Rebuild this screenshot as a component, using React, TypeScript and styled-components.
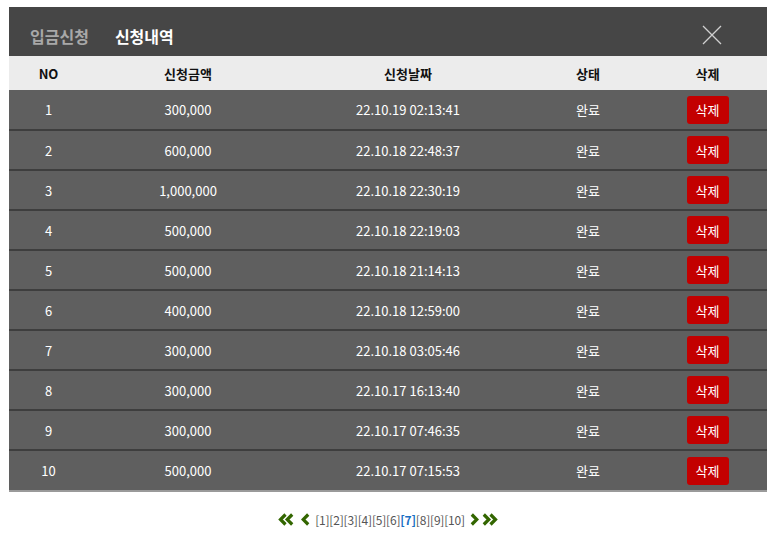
import { styled, createGlobalStyle } from "styled-components";

interface Deposit {
    no: number;
    amount: string;
    date: string;
    status: string;
}

const history: Deposit[] = [
    { no: 1, amount: "300,000", date: "22.10.19 02:13:41", status: "완료" },
    { no: 2, amount: "600,000", date: "22.10.18 22:48:37", status: "완료" },
    { no: 3, amount: "1,000,000", date: "22.10.18 22:30:19", status: "완료" },
    { no: 4, amount: "500,000", date: "22.10.18 22:19:03", status: "완료" },
    { no: 5, amount: "500,000", date: "22.10.18 21:14:13", status: "완료" },
    { no: 6, amount: "400,000", date: "22.10.18 12:59:00", status: "완료" },
    { no: 7, amount: "300,000", date: "22.10.18 03:05:46", status: "완료" },
    { no: 8, amount: "300,000", date: "22.10.17 16:13:40", status: "완료" },
    { no: 9, amount: "300,000", date: "22.10.17 07:46:35", status: "완료" },
    { no: 10, amount: "500,000", date: "22.10.17 07:15:53", status: "완료" },
];

const pages = [1, 2, 3, 4, 5, 6, 7, 8, 9, 10];
const currentPage = 7;

const Chevron = ({ dir, double }: { dir: "left" | "right"; double?: boolean }) => {
    const w = double ? 16 : 9;
    const flip = dir === "left" ? `translate(${w} 0) scale(-1 1)` : undefined;
    return (
        <svg width={w} height="13" viewBox={`0 0 ${w} 13`}>
            <g transform={flip} fill="none" stroke="#336600" strokeWidth="3.2" strokeLinejoin="miter">
                <polyline points="1.8,1.5 6.8,6.5 1.8,11.5" />
                {double && <polyline points="8.5,1.5 13.5,6.5 8.5,11.5" />}
            </g>
        </svg>
    );
};

const App = () => {
    return (
        <>
            <GlobalStyle />
            <Page>
                <Panel>
                    <TopBar>
                        <Tabs>
                            <Tab>입금신청</Tab>
                            <Tab $active>신청내역</Tab>
                        </Tabs>
                        <CloseButton aria-label="close">
                            <svg width="20" height="20" viewBox="0 0 20 20">
                                <path d="M1 1 L19 19 M19 1 L1 19" stroke="#d0d0d0" strokeWidth="1.3" />
                            </svg>
                        </CloseButton>
                    </TopBar>
                    <Table>
                        <colgroup>
                            <col style={{ width: 79 }} />
                            <col style={{ width: 200 }} />
                            <col style={{ width: 240 }} />
                            <col style={{ width: 120 }} />
                            <col style={{ width: 119 }} />
                        </colgroup>
                        <thead>
                            <tr>
                                <Th>NO</Th>
                                <Th>신청금액</Th>
                                <Th>신청날짜</Th>
                                <Th>상태</Th>
                                <Th>삭제</Th>
                            </tr>
                        </thead>
                        <tbody>
                            {history.map((row) => (
                                <Row key={row.no}>
                                    <Td>{row.no}</Td>
                                    <Td>{row.amount}</Td>
                                    <Td>{row.date}</Td>
                                    <Td>{row.status}</Td>
                                    <Td>
                                        <DeleteButton>삭제</DeleteButton>
                                    </Td>
                                </Row>
                            ))}
                        </tbody>
                    </Table>
                </Panel>
                <Pager>
                    <PagerArrow $gap={7}><Chevron dir="left" double /></PagerArrow>
                    <PagerArrow $gap={5}><Chevron dir="left" /></PagerArrow>
                    <PageList>
                        {pages.map((p) => (
                            <PageLink key={p} $current={p === currentPage}>[{p}]</PageLink>
                        ))}
                    </PageList>
                    <PagerArrow $gap={3} $before={5}><Chevron dir="right" /></PagerArrow>
                    <PagerArrow><Chevron dir="right" double /></PagerArrow>
                </Pager>
            </Page>
        </>
    );
};

export default App;

const GlobalStyle = createGlobalStyle`
    body {
        margin: 0;
        background: #ffffff;
        font-family: "Noto Sans CJK KR", "Noto Sans", sans-serif;
    }
`;

const Page = styled.div`
    width: 777px;
    padding: 7px 10px 0 9px;
    box-sizing: border-box;
`;

const Panel = styled.div`
    background: #5f5f5f;
    border-bottom: 2px solid #9a9a9a;
`;

const TopBar = styled.div`
    height: 49px;
    box-sizing: border-box;
    background: #464646;
    display: flex;
    align-items: center;
    justify-content: space-between;
    padding: 6px 45px 0 21px;
`;

const Tabs = styled.div`
    display: flex;
    gap: 26px;
    padding-top: 2px;
`;

const Tab = styled.span<{ $active?: boolean }>`
    font-size: 16px;
    font-weight: bold;
    color: ${(p) => (p.$active ? "#ffffff" : "#a8a8a8")};
`;

const CloseButton = styled.button`
    background: transparent;
    border: none;
    padding: 0;
    display: flex;
    cursor: pointer;
`;

const Table = styled.table`
    width: 100%;
    border-collapse: collapse;
    table-layout: fixed;
    font-size: 13px;
`;

const Th = styled.th`
    height: 34px;
    padding: 0;
    background: #ececec;
    color: #111111;
    font-weight: bold;
    text-align: center;
`;

const Row = styled.tr`
    height: 40px;
    & + & td {
        border-top: 2px solid #3e3e3e;
    }
`;

const Td = styled.td`
    padding: 0;
    color: #ffffff;
    text-align: center;
    vertical-align: middle;
`;

const DeleteButton = styled.button`
    width: 42px;
    height: 28px;
    border: none;
    border-radius: 3px;
    background: #c30000;
    color: #ffffff;
    font-family: inherit;
    font-size: 13px;
    padding: 0;
    cursor: pointer;
`;

const Pager = styled.div`
    display: flex;
    justify-content: center;
    align-items: center;
    margin-top: 19px;
`;

const PagerArrow = styled.a<{ $gap?: number; $before?: number }>`
    display: flex;
    align-items: center;
    cursor: pointer;
    margin-left: ${(p) => p.$before ?? 0}px;
    margin-right: ${(p) => p.$gap ?? 0}px;
`;

const PageList = styled.span`
    display: flex;
    font-size: 12px;
    letter-spacing: -0.2px;
`;

const PageLink = styled.a<{ $current?: boolean }>`
    color: ${(p) => (p.$current ? "#1a6fc4" : "#555555")};
    font-weight: ${(p) => (p.$current ? "bold" : "normal")};
    cursor: pointer;
`;
